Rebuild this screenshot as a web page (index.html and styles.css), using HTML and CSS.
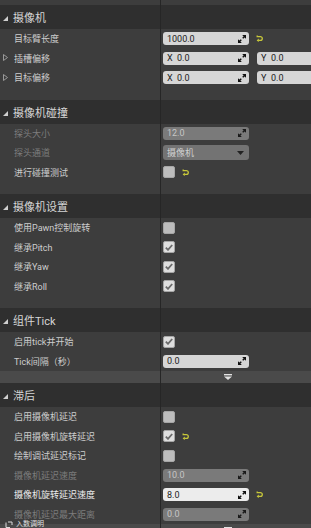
FILE: index.html
```html
<!DOCTYPE html>
<html>
<head>
    <link rel="stylesheet" href="styles.css">
</head>
<body>
    <div class="panel">
        <!-- 摄像机 -->
        <div class="group">
            <div class="group-head"><span class="caret"></span>摄像机</div>
            <div class="row">
                <div class="name">目标臂长度</div>
                <div class="value">
                    <div class="field"><span class="num">1000.0</span><svg class="spin" width="8" height="8" viewBox="0 0 8 8"><path d="M4.2 0H8V3.8L6.6 2.4 5.2 3.8 4.2 2.8 5.6 1.4Z M3.8 8H0V4.2L1.4 5.6 2.8 4.2 3.8 5.2 2.4 6.6Z"/></svg></div>
                    <svg class="reset" width="7" height="7" viewBox="0 0 7 7"><path d="M1.2 0.6V1.6H4.4A1.9 1.9 0 0 1 4.4 5.4H2.4" fill="none" stroke="#c8c83a" stroke-width="1.3"/><path d="M2.8 3.6 0.6 5.4 2.8 7Z" fill="#c8c83a"/></svg>
                </div>
            </div>
            <div class="row">
                <div class="name sub"><svg class="expander" width="5" height="7" viewBox="0 0 5 7"><path d="M0.5 0.5 4.5 3.5 0.5 6.5Z" fill="none" stroke="#9a9a9a"/></svg>插槽偏移</div>
                <div class="value vec">
                    <div class="field"><span class="axis">X</span><span class="num">0.0</span><svg class="spin" width="8" height="8" viewBox="0 0 8 8"><path d="M4.2 0H8V3.8L6.6 2.4 5.2 3.8 4.2 2.8 5.6 1.4Z M3.8 8H0V4.2L1.4 5.6 2.8 4.2 3.8 5.2 2.4 6.6Z"/></svg></div>
                    <div class="field"><span class="axis">Y</span><span class="num">0.0</span><svg class="spin" width="8" height="8" viewBox="0 0 8 8"><path d="M4.2 0H8V3.8L6.6 2.4 5.2 3.8 4.2 2.8 5.6 1.4Z M3.8 8H0V4.2L1.4 5.6 2.8 4.2 3.8 5.2 2.4 6.6Z"/></svg></div>
                </div>
            </div>
            <div class="row">
                <div class="name sub"><svg class="expander" width="5" height="7" viewBox="0 0 5 7"><path d="M0.5 0.5 4.5 3.5 0.5 6.5Z" fill="none" stroke="#9a9a9a"/></svg>目标偏移</div>
                <div class="value vec">
                    <div class="field"><span class="axis">X</span><span class="num">0.0</span><svg class="spin" width="8" height="8" viewBox="0 0 8 8"><path d="M4.2 0H8V3.8L6.6 2.4 5.2 3.8 4.2 2.8 5.6 1.4Z M3.8 8H0V4.2L1.4 5.6 2.8 4.2 3.8 5.2 2.4 6.6Z"/></svg></div>
                    <div class="field"><span class="axis">Y</span><span class="num">0.0</span><svg class="spin" width="8" height="8" viewBox="0 0 8 8"><path d="M4.2 0H8V3.8L6.6 2.4 5.2 3.8 4.2 2.8 5.6 1.4Z M3.8 8H0V4.2L1.4 5.6 2.8 4.2 3.8 5.2 2.4 6.6Z"/></svg></div>
                </div>
            </div>
        </div>

        <!-- 摄像机碰撞 -->
        <div class="group">
            <div class="group-head"><span class="caret"></span>摄像机碰撞</div>
            <div class="row">
                <div class="name off">探头大小</div>
                <div class="value">
                    <div class="field off"><span class="num">12.0</span><svg class="spin" width="8" height="8" viewBox="0 0 8 8"><path d="M4.2 0H8V3.8L6.6 2.4 5.2 3.8 4.2 2.8 5.6 1.4Z M3.8 8H0V4.2L1.4 5.6 2.8 4.2 3.8 5.2 2.4 6.6Z"/></svg></div>
                </div>
            </div>
            <div class="row">
                <div class="name off">探头通道</div>
                <div class="value">
                    <div class="select"><span class="num">摄像机</span><svg width="7" height="4" viewBox="0 0 7 4"><path d="M0 0H7L3.5 4Z" fill="#222"/></svg></div>
                </div>
            </div>
            <div class="row">
                <div class="name">进行碰撞测试</div>
                <div class="value">
                    <div class="check"></div>
                    <svg class="reset" width="7" height="7" viewBox="0 0 7 7"><path d="M1.2 0.6V1.6H4.4A1.9 1.9 0 0 1 4.4 5.4H2.4" fill="none" stroke="#c8c83a" stroke-width="1.3"/><path d="M2.8 3.6 0.6 5.4 2.8 7Z" fill="#c8c83a"/></svg>
                </div>
            </div>
        </div>

        <!-- 摄像机设置 -->
        <div class="group">
            <div class="group-head"><span class="caret"></span>摄像机设置</div>
            <div class="row">
                <div class="name">使用Pawn控制旋转</div>
                <div class="value"><div class="check"></div></div>
            </div>
            <div class="row">
                <div class="name">继承Pitch</div>
                <div class="value"><div class="check on"><svg width="8" height="7" viewBox="0 0 8 7"><path d="M0.8 3.6 3 5.8 7.2 1" fill="none" stroke="#6a6a6a" stroke-width="1.8"/></svg></div></div>
            </div>
            <div class="row">
                <div class="name">继承Yaw</div>
                <div class="value"><div class="check on"><svg width="8" height="7" viewBox="0 0 8 7"><path d="M0.8 3.6 3 5.8 7.2 1" fill="none" stroke="#6a6a6a" stroke-width="1.8"/></svg></div></div>
            </div>
            <div class="row">
                <div class="name">继承Roll</div>
                <div class="value"><div class="check on"><svg width="8" height="7" viewBox="0 0 8 7"><path d="M0.8 3.6 3 5.8 7.2 1" fill="none" stroke="#6a6a6a" stroke-width="1.8"/></svg></div></div>
            </div>
        </div>

        <!-- 组件Tick -->
        <div class="group tight">
            <div class="group-head"><span class="caret"></span>组件Tick</div>
            <div class="row">
                <div class="name">启用tick并开始</div>
                <div class="value"><div class="check on"><svg width="8" height="7" viewBox="0 0 8 7"><path d="M0.8 3.6 3 5.8 7.2 1" fill="none" stroke="#6a6a6a" stroke-width="1.8"/></svg></div></div>
            </div>
            <div class="row">
                <div class="name">Tick间隔（秒）</div>
                <div class="value">
                    <div class="field"><span class="num">0.0</span><svg class="spin" width="8" height="8" viewBox="0 0 8 8"><path d="M4.2 0H8V3.8L6.6 2.4 5.2 3.8 4.2 2.8 5.6 1.4Z M3.8 8H0V4.2L1.4 5.6 2.8 4.2 3.8 5.2 2.4 6.6Z"/></svg></div>
                </div>
            </div>
            <div class="more"><svg width="8" height="6" viewBox="0 0 8 6"><rect width="8" height="1.4" fill="#e2e2e2"/><path d="M0 2.4H8L4 6Z" fill="#e2e2e2"/></svg></div>
        </div>

        <!-- 滞后 -->
        <div class="group tight">
            <div class="group-head"><span class="caret"></span>滞后</div>
            <div class="row">
                <div class="name">启用摄像机延迟</div>
                <div class="value"><div class="check"></div></div>
            </div>
            <div class="row">
                <div class="name">启用摄像机旋转延迟</div>
                <div class="value">
                    <div class="check on"><svg width="8" height="7" viewBox="0 0 8 7"><path d="M0.8 3.6 3 5.8 7.2 1" fill="none" stroke="#6a6a6a" stroke-width="1.8"/></svg></div>
                    <svg class="reset" width="7" height="7" viewBox="0 0 7 7"><path d="M1.2 0.6V1.6H4.4A1.9 1.9 0 0 1 4.4 5.4H2.4" fill="none" stroke="#c8c83a" stroke-width="1.3"/><path d="M2.8 3.6 0.6 5.4 2.8 7Z" fill="#c8c83a"/></svg>
                </div>
            </div>
            <div class="row">
                <div class="name">绘制调试延迟标记</div>
                <div class="value"><div class="check"></div></div>
            </div>
            <div class="row">
                <div class="name off">摄像机延迟速度</div>
                <div class="value">
                    <div class="field off"><span class="num">10.0</span><svg class="spin" width="8" height="8" viewBox="0 0 8 8"><path d="M4.2 0H8V3.8L6.6 2.4 5.2 3.8 4.2 2.8 5.6 1.4Z M3.8 8H0V4.2L1.4 5.6 2.8 4.2 3.8 5.2 2.4 6.6Z"/></svg></div>
                </div>
            </div>
            <div class="row">
                <div class="name hot">摄像机旋转延迟速度</div>
                <div class="value">
                    <div class="field hot"><span class="num">8.0</span><svg class="spin" width="8" height="8" viewBox="0 0 8 8"><path d="M4.2 0H8V3.8L6.6 2.4 5.2 3.8 4.2 2.8 5.6 1.4Z M3.8 8H0V4.2L1.4 5.6 2.8 4.2 3.8 5.2 2.4 6.6Z"/></svg></div>
                    <svg class="reset" width="7" height="7" viewBox="0 0 7 7"><path d="M1.2 0.6V1.6H4.4A1.9 1.9 0 0 1 4.4 5.4H2.4" fill="none" stroke="#c8c83a" stroke-width="1.3"/><path d="M2.8 3.6 0.6 5.4 2.8 7Z" fill="#c8c83a"/></svg>
                </div>
            </div>
            <div class="row">
                <div class="name off">摄像机延迟最大距离</div>
                <div class="value">
                    <div class="field off"><span class="num">0.0</span><svg class="spin" width="8" height="8" viewBox="0 0 8 8"><path d="M4.2 0H8V3.8L6.6 2.4 5.2 3.8 4.2 2.8 5.6 1.4Z M3.8 8H0V4.2L1.4 5.6 2.8 4.2 3.8 5.2 2.4 6.6Z"/></svg></div>
                </div>
            </div>
            <div class="more"><svg width="8" height="6" viewBox="0 0 8 6"><rect width="8" height="1.4" fill="#e2e2e2"/><path d="M0 2.4H8L4 6Z" fill="#e2e2e2"/></svg></div>
        </div>

        <div class="mark"><svg width="8" height="7" viewBox="0 0 8 7"><path d="M1 1.5V6.5H5M3 1H7V4" fill="none" stroke="#ddd" stroke-width="1"/></svg>入数调明</div>
    </div>
</body>
</html>
```

FILE: styles.css
```css
body {
    margin: 0;
    background-color: #3d3d3d;
    font-family: Roboto, "Noto Sans CJK SC", sans-serif;
    font-size: 9px;
    color: #cdcdcd;
    overflow: hidden;
}

.panel {
    position: relative;
    width: 311px;
    height: 528px;
    padding-top: 5px;
    box-sizing: border-box;
    overflow: hidden;
}

/* splitter between names and values */
.panel::after {
    content: "";
    position: absolute;
    left: 160px;
    top: 0;
    bottom: 0;
    width: 1px;
    background-color: #262626;
}

.group {
    padding-bottom: 12px;
}

.group.tight {
    padding-bottom: 0;
}

.group-head {
    height: 24px;
    background-color: #2f2f2f;
    display: flex;
    align-items: center;
    padding-left: 3px;
    font-size: 11px;
    color: #d6d6d6;
}

.caret {
    width: 0;
    height: 0;
    border-left: 5px solid transparent;
    border-bottom: 5px solid #cfcfcf;
    margin-right: 5px;
    margin-top: 3px;
}

.row {
    display: grid;
    grid-template-columns: 160px 1fr;
    height: 19.5px;
    align-items: center;
}

.name {
    position: relative;
    padding-left: 14px;
    white-space: nowrap;
}

.name.off {
    color: #7c7c7c;
}

.name.hot {
    color: #ececec;
}

.expander {
    position: absolute;
    left: 3px;
    top: 50%;
    margin-top: -4px;
}

.value {
    display: flex;
    align-items: center;
    gap: 7px;
    padding-left: 3px;
    white-space: nowrap;
}

.value.vec {
    gap: 8px;
}

.field,
.select {
    flex: none;
    width: 86px;
    height: 13px;
    box-sizing: border-box;
    border-radius: 3px;
    display: flex;
    align-items: center;
    padding: 0 3px 0 4px;
    background-color: #d6d6d6;
    color: #1c1c1c;
}

.field .num,
.select .num {
    flex: 1;
}

.field .axis {
    width: 10px;
}

.spin {
    fill: #111;
}

.field.off {
    background-color: #7a7a7a;
    color: #c6c6c6;
}

.field.off .spin {
    fill: #1a1a1a;
}

.field.hot {
    background-color: #ececec;
}

.select {
    height: 15px;
    background-color: #737373;
    color: #d0d0d0;
    padding-right: 5px;
}

.check {
    width: 12px;
    height: 12px;
    box-sizing: border-box;
    border-radius: 2px;
    border: 1px solid #a6a6a6;
    background-color: #bdbdbd;
    display: flex;
    align-items: center;
    justify-content: center;
}

.check.on {
    background-color: #dedede;
}

.more {
    height: 12px;
    background-color: #4a4a4a;
    padding-left: 224px;
    display: flex;
    align-items: center;
}

.mark {
    position: absolute;
    left: 5px;
    bottom: 0;
    display: flex;
    align-items: center;
    gap: 3px;
    font-size: 7px;
    line-height: 8px;
    color: #e0e0e0;
}
```
